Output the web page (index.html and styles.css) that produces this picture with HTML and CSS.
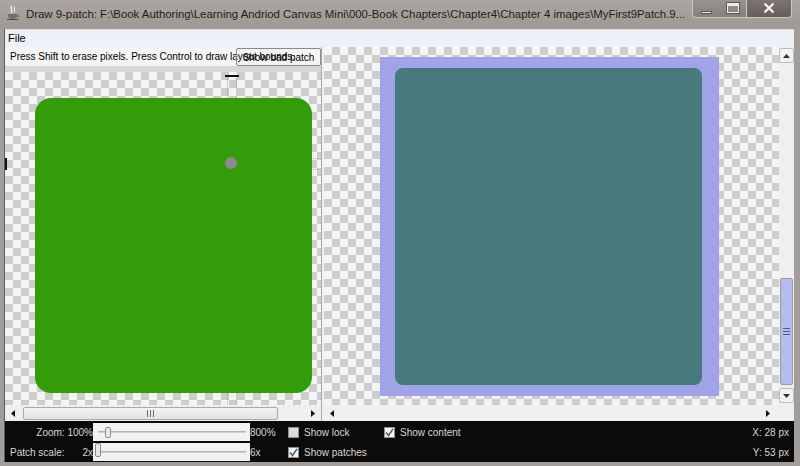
FILE: index.html
```html
<!DOCTYPE html>
<html>
<head>
<meta charset="utf-8">
<title>Draw 9-patch</title>
<link rel="stylesheet" href="styles.css">
</head>
<body>
<div class="window">
  <div class="titlebar">
    <svg class="app-icon" width="14" height="15" viewBox="0 0 14 15">
      <path d="M6 1 C3 4 8 5 5 8" fill="none" stroke="#e8e8e8" stroke-width="1.4"/>
      <path d="M9 2 C7 4 10 5 8 7" fill="none" stroke="#e8e8e8" stroke-width="1.2"/>
      <path d="M2 9 H11 V11 C11 13 9 14 7 14 H6 C4 14 2 13 2 11 Z" fill="#6f6f6f"/>
      <path d="M11 9.5 C13.5 9.5 13.5 12.5 11 12" fill="none" stroke="#6f6f6f" stroke-width="1"/>
      <path d="M1 14.5 H12" stroke="#4a4a4a" stroke-width="1"/>
    </svg>
    <span class="title">Draw 9-patch: F:\Book Authoring\Learning Andriod Canvas Mini\000-Book Chapters\Chapter4\Chapter 4 images\MyFirst9Patch.9...</span>
    <div class="caption">
      <div class="cap-group">
        <div class="cap-btn"><span class="min-glyph"></span></div>
        <div class="cap-btn"><span class="max-glyph"></span></div>
      </div>
      <div class="cap-close">
        <svg width="12" height="10" viewBox="0 0 12 10"><path d="M1.5 0.5 L10.5 9.5 M10.5 0.5 L1.5 9.5" stroke="#f4f4f4" stroke-width="2.2"/></svg>
      </div>
    </div>
  </div>

  <div class="frame">
    <div class="client">
      <div class="menubar"><span>File</span></div>

      <div class="main">
        <div class="left">
          <div class="hint">
            <span>Press Shift to erase pixels. Press Control to draw layout bounds.</span>
            <button class="badpatch">Show bad patch</button>
          </div>
          <div class="canvas checker">
            <div class="green"></div>
            <div class="mark mark-top-line"></div>
            <div class="mark mark-top"></div>
            <div class="mark mark-bottom"></div>
            <div class="mark mark-right"></div>
            <div class="mark mark-left"></div>
            <div class="dot"></div>
          </div>
          <div class="hscroll">
            <div class="sb-btn"><svg width="4" height="7" viewBox="0 0 4 7"><polygon points="4,0 0,3.5 4,7" fill="#111"/></svg></div>
            <div class="h-thumb"><span class="grip-v"></span></div>
            <div class="track"></div>
            <div class="sb-btn"><svg width="4" height="7" viewBox="0 0 4 7"><polygon points="0,0 4,3.5 0,7" fill="#111"/></svg></div>
          </div>
        </div>

        <div class="divider"></div>

        <div class="right">
          <div class="right-top">
            <div class="viewport checker">
              <div class="lav"><div class="teal"></div></div>
            </div>
            <div class="vscroll">
              <div class="sb-btn v"><svg width="7" height="4" viewBox="0 0 7 4"><polygon points="0,4 3.5,0 7,4" fill="#333"/></svg></div>
              <div class="track"></div>
              <div class="v-thumb"><span class="grip-h"></span></div>
              <div class="sb-btn v down"><svg width="7" height="4" viewBox="0 0 7 4"><polygon points="0,0 3.5,4 7,0" fill="#333"/></svg></div>
            </div>
          </div>
          <div class="hscroll">
            <div class="sb-btn"><svg width="4" height="7" viewBox="0 0 4 7"><polygon points="4,0 0,3.5 4,7" fill="#111"/></svg></div>
            <div class="track"></div>
            <div class="sb-btn"><svg width="4" height="7" viewBox="0 0 4 7"><polygon points="0,0 4,3.5 0,7" fill="#111"/></svg></div>
            <div class="corner"></div>
          </div>
        </div>
      </div>

      <div class="controls">
        <div class="lbl right-al">Zoom: 100%</div>
        <div class="slider"><span class="s-track"></span><span class="s-thumb zoom-thumb"></span></div>
        <div class="lbl">800%</div>
        <label class="cb"><span class="box"></span><span>Show lock</span></label>
        <label class="cb"><span class="box on"><svg width="9" height="9" viewBox="0 0 9 9"><path d="M1 4.5 L3.5 7.5 L8 0.8" fill="none" stroke="#3f6282" stroke-width="1.5"/></svg></span><span>Show content</span></label>
        <div class="lbl right-al">X: 28 px</div>

        <div class="lbl split"><span>Patch scale:</span><span>2x</span></div>
        <div class="slider"><span class="s-track"></span><span class="s-thumb scale-thumb"></span></div>
        <div class="lbl">6x</div>
        <label class="cb"><span class="box on"><svg width="9" height="9" viewBox="0 0 9 9"><path d="M1 4.5 L3.5 7.5 L8 0.8" fill="none" stroke="#3f6282" stroke-width="1.5"/></svg></span><span>Show patches</span></label>
        <div></div>
        <div class="lbl right-al">Y: 53 px</div>
      </div>
    </div>
  </div>
</div>
</body>
</html>
```

FILE: styles.css
```css
* { box-sizing: border-box; }
html, body { margin: 0; padding: 0; }
body {
  width: 800px;
  height: 466px;
  overflow: hidden;
  background: #a29d98;
  font-family: "Liberation Sans", Arial, sans-serif;
}
.window {
  width: 800px;
  height: 466px;
  display: flex;
  flex-direction: column;
}

/* title bar */
.titlebar {
  height: 29px;
  flex: none;
  display: flex;
  align-items: flex-start;
  background: linear-gradient(#aba6a1, #9d9893);
}
.app-icon { margin: 5px 0 0 6px; flex: none; }
.title {
  margin-left: 6px;
  font-size: 11.4px;
  line-height: 28px;
  color: #1c1c1c;
  white-space: nowrap;
  overflow: hidden;
  flex: 0 1 auto;
}
.caption {
  margin-left: auto;
  margin-right: 8px;
  display: flex;
  height: 18px;
  flex: none;
}
.cap-group {
  display: flex;
  width: 54px;
  border: 1px solid #cdc8c3;
  border-top: none;
  border-right: none;
  border-radius: 0 0 0 4px;
  background: linear-gradient(#9a948f, #857f7a);
}
.cap-btn {
  flex: 1;
  display: flex;
  justify-content: center;
  align-items: flex-start;
}
.min-glyph {
  margin-top: 11px;
  width: 11px;
  height: 3px;
  background: #ededed;
  border: 1px solid #5a5552;
}
.max-glyph {
  margin-top: 3px;
  width: 12px;
  height: 10px;
  border: 1px solid #ededed;
  border-top-width: 3px;
  box-shadow: 0 0 0 1px #5a5552;
}
.cap-close {
  width: 46px;
  border: 1px solid #cdc8c3;
  border-top: none;
  border-radius: 0 0 4px 0;
  background: linear-gradient(#7d746f, #675e59);
  display: flex;
  justify-content: center;
  align-items: flex-start;
  padding-top: 3px;
}

/* frame + client */
.frame {
  flex: 1;
  display: flex;
  padding: 0 6px 4px 4px;
  min-height: 0;
}
.client {
  flex: 1;
  display: flex;
  flex-direction: column;
  background: #f0f0f0;
  border-left: 1px solid #5f5b58;
  min-width: 0;
}
.menubar {
  height: 18px;
  flex: none;
  background: #eef0f7;
  border-top: 1px solid #d9dae2;
  font-size: 11px;
  padding: 2px 0 0 3px;
  color: #000;
}
.main {
  flex: 1;
  display: flex;
  min-height: 0;
}

/* left editor pane */
.left {
  width: 316px;
  flex: none;
  display: flex;
  flex-direction: column;
}
.hint {
  height: 19px;
  flex: none;
  position: relative;
  background: #f4f4f4;
  font-size: 10px;
  padding: 4px 0 0 5px;
  white-space: nowrap;
  overflow: hidden;
  color: #000;
}
.badpatch {
  position: absolute;
  left: 231px;
  top: 1px;
  width: 85px;
  height: 18px;
  border: 1px solid #8a8a8a;
  border-radius: 2px;
  background: transparent;
  font: 10px "Liberation Sans", Arial, sans-serif;
  color: #000;
  padding: 0;
}
.checker {
  background-color: #f4f4f4;
  background-image: conic-gradient(#cdcdcd 25%, transparent 0 50%, #cdcdcd 0 75%, transparent 0);
  background-size: 16px 16px;
}
.canvas {
  flex: 1;
  position: relative;
  border-top: 6px solid #d7d7d7;
  padding: 26px 0 0 30px;
  min-height: 0;
}
.green {
  width: 277px;
  height: 295px;
  background: #359c09;
  border-radius: 16px;
}
.mark { position: absolute; }
.mark-top-line { left: 220px; top: 3px; width: 14px; height: 2px; background: #111; }
.mark-top {
  left: 222px; top: 6px; width: 10px; height: 20px;
  border-left: 1px dotted #8a8a8a; border-right: 1px dotted #8a8a8a;
  opacity: .7;
}
.mark-bottom {
  left: 222px; top: 321px; width: 10px; height: 11px;
  border-left: 1px dotted #8a8a8a; border-right: 1px dotted #8a8a8a;
  opacity: .7;
}
.mark-right {
  left: 306px; top: 86px; width: 7px; height: 12px;
  border-top: 1px dotted #8a8a8a; border-bottom: 1px dotted #8a8a8a;
  opacity: .7;
}
.mark-left { left: 0; top: 86px; width: 2px; height: 12px; background: #111; }
.dot {
  position: absolute;
  left: 220px;
  top: 85px;
  width: 12px;
  height: 12px;
  border-radius: 50%;
  background: #8c8a8c;
}

/* scrollbars */
.hscroll {
  height: 16px;
  flex: none;
  display: flex;
  align-items: center;
  background: #efefef;
}
.sb-btn {
  width: 16px;
  height: 14px;
  flex: none;
  display: flex;
  align-items: center;
  justify-content: center;
}
.track { flex: 1; align-self: stretch; }
.h-thumb {
  margin-left: 2px;
  width: 255px;
  height: 13px;
  border: 1px solid #a8a8a8;
  border-radius: 2px;
  background: linear-gradient(#f4f4f4, #e2e2e2);
  display: flex;
  justify-content: center;
  align-items: center;
}
.grip-v {
  width: 7px;
  height: 7px;
  background: repeating-linear-gradient(90deg, #6a6a6a 0 1px, transparent 1px 3px);
}
.corner { width: 18px; align-self: stretch; background: #efefef; }
.divider {
  width: 3px;
  flex: none;
  background: #f0f0f0;
  border-left: 1px solid #a9a9a9;
}

/* right preview pane */
.right {
  flex: 1;
  display: flex;
  flex-direction: column;
  min-width: 0;
}
.right-top {
  flex: 1;
  display: flex;
  min-height: 0;
}
.viewport {
  flex: 1;
  display: flex;
  align-items: center;
  padding-left: 56px;
}
.lav {
  width: 339px;
  height: 339px;
  background: #a0a3e8;
  padding: 11px 17px 11px 15px;
}
.teal {
  width: 100%;
  height: 100%;
  background: #467a7c;
  border-radius: 8px;
}
.vscroll {
  width: 15px;
  flex: none;
  display: flex;
  flex-direction: column;
  padding: 1px 0 2px;
  background: #efefef;
}
.sb-btn.v {
  width: 15px;
  height: 15px;
  border: 1px solid #bdbdbd;
  border-radius: 2px;
  background: #f2f2f2;
}
.sb-btn.down { margin-top: 3px; }
.v-thumb {
  height: 107px;
  flex: none;
  margin: 0 1px;
  border: 1px solid #9c9c9c;
  border-radius: 2px;
  background: #b7bcef;
  display: flex;
  justify-content: center;
  align-items: center;
}
.grip-h {
  width: 7px;
  height: 7px;
  background: repeating-linear-gradient(180deg, #4a5a8a 0 1px, transparent 1px 3px);
}

/* bottom controls */
.controls {
  height: 41px;
  flex: none;
  background: #0b0b0b;
  color: #d6d6d6;
  font-size: 10px;
  display: grid;
  grid-template-columns: 88px 157px 38px 96px 1fr auto;
  grid-template-rows: 18px 18px;
  row-gap: 2px;
  padding: 2px 5px 1px 0;
  align-items: center;
}
.lbl { white-space: nowrap; }
.right-al { text-align: right; }
.split {
  display: flex;
  justify-content: space-between;
  padding-left: 5px;
}
.slider {
  height: 18px;
  position: relative;
  background: #f2f2f2;
  display: flex;
  align-items: center;
}
.s-track {
  position: absolute;
  left: 5px;
  right: 4px;
  top: 8px;
  height: 2px;
  background: #d0d0d0;
  border-top: 1px solid #b4b4b4;
}
.s-thumb {
  position: relative;
  width: 6px;
  border: 1px solid #8c8c8c;
  border-radius: 2px;
  background: #e8e8e8;
}
.zoom-thumb { margin-left: 12px; height: 11px; }
.scale-thumb { margin-left: 2px; height: 14px; align-self: flex-start; }
.cb {
  display: flex;
  align-items: center;
  gap: 5px;
  white-space: nowrap;
}
.box {
  width: 11px;
  height: 11px;
  flex: none;
  border: 1px solid #8f8f8f;
  background: #dcdcdc;
  display: flex;
  align-items: center;
  justify-content: center;
}
.box.on { background: #f2f2f2; }
```
